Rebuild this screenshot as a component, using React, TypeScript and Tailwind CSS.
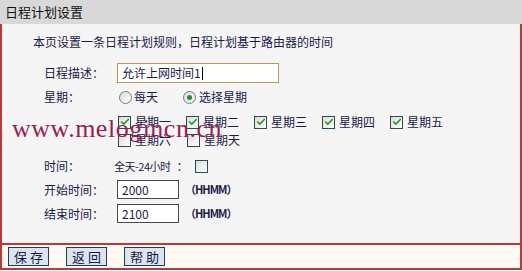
import { Check } from 'lucide-react';

const font = { fontFamily: '"Noto Sans CJK SC", "Noto Sans", sans-serif' };

const weekdays = ['星期一', '星期二', '星期三', '星期四', '星期五'];
const weekend = ['星期六', '星期天'];

function Box({ checked }: { checked?: boolean }) {
  return (
    <span className="flex h-[13px] w-[13px] shrink-0 items-center justify-center border border-[#2b4a5e] bg-gradient-to-br from-[#dcdcd4] to-white">
      {checked && <Check className="h-[10px] w-[10px] text-[#21a121]" strokeWidth={4} />}
    </span>
  );
}

function Radio({ checked }: { checked?: boolean }) {
  return (
    <span className="flex h-[13px] w-[13px] shrink-0 items-center justify-center rounded-full border border-[#6b7c8c] bg-gradient-to-br from-[#dcdcd4] to-white">
      {checked && <span className="h-[5px] w-[5px] rounded-full bg-[#2a8a2a]" />}
    </span>
  );
}

function Hint() {
  return <span className="ml-[6px] text-[11px] font-semibold tracking-[-1px]">（HHMM）</span>;
}

export default function App() {
  return (
    <div className="relative w-[522px] h-[271px] bg-white text-[12px] text-[#1a1a4a]" style={font}>
      {/* Header */}
      <div className="h-[24px] bg-[#d8d8d8] flex items-center pl-[5px] text-[13px] text-[#111]">
        日程计划设置
      </div>

      {/* Body */}
      <div className="h-[221px] bg-[#f5f5f5] border-x-2 border-b-2 border-[#b83a3a] pt-[10px]">
        <div className="h-[16px] pl-[31px] flex items-center">本页设置一条日程计划规则，日程计划基于路由器的时间</div>

        <div className="mt-[13px] h-[20px] pl-[42px] flex items-center">
          <span className="w-[73px]">日程描述：</span>
          <div className="w-[162px] h-[20px] border border-[#b89a4e] bg-white flex items-center pl-[4px]">
            允许上网时间1<span className="ml-px h-[13px] w-px bg-black" />
          </div>
        </div>

        <div className="mt-[6px] h-[16px] pl-[42px] flex items-center">
          <span className="w-[75px]">星期：</span>
          <Radio />
          <span className="ml-[2px] w-[49px]">每天</span>
          <Radio checked />
          <span className="ml-[3px]">选择星期</span>
        </div>

        <div className="mt-[9px] h-[16px] pl-[116px] flex items-center">
          {weekdays.map((d) => (
            <div key={d} className="w-[68px] flex items-center gap-[4px]">
              <Box checked />
              <span>{d}</span>
            </div>
          ))}
        </div>
        <div className="mt-[2px] h-[16px] pl-[116px] flex items-center">
          {weekend.map((d) => (
            <div key={d} className="w-[69px] flex items-center gap-[4px]">
              <Box />
              <span>{d}</span>
            </div>
          ))}
        </div>

        <div className="mt-[10px] h-[16px] pl-[42px] flex items-center">
          <span className="w-[70px]">时间：</span>
          <span className="text-[11px] tracking-[-0.5px]">全天-24小时</span>
          <span className="ml-[6px] mr-[6px]">：</span>
          <Box />
        </div>

        <div className="mt-[6px] h-[19px] pl-[42px] flex items-center">
          <span className="w-[73px]">开始时间：</span>
          <div className="w-[62px] h-[19px] border border-[#4a4a4a] bg-white flex items-center pl-[4px]">2000</div>
          <Hint />
        </div>

        <div className="mt-[5px] h-[19px] pl-[42px] flex items-center">
          <span className="w-[73px]">结束时间：</span>
          <div className="w-[62px] h-[19px] border border-[#4a4a4a] bg-white flex items-center pl-[4px]">2100</div>
          <Hint />
        </div>
      </div>

      {/* Footer */}
      <div className="h-[25px] bg-[#fdf8f2] border-x-2 border-b-2 border-[#b83a3a] flex items-center pl-[6px] gap-[17px]">
        {['保 存', '返 回', '帮 助'].map((b) => (
          <button key={b} className="w-[41px] h-[19px] border border-[#2c3a48] bg-[#dae5f0] text-[13px] text-[#1a1a4a] flex items-center justify-center leading-none">
            {b}
          </button>
        ))}
      </div>

      {/* Watermark */}
      <div
        className="absolute left-[12px] top-[116px] text-[26px] leading-none tracking-[0.5px] text-[#9a1f50] pointer-events-none"
        style={{ fontFamily: '"Liberation Serif", serif' }}
      >
        www.melogincn.cn
      </div>
    </div>
  );
}
